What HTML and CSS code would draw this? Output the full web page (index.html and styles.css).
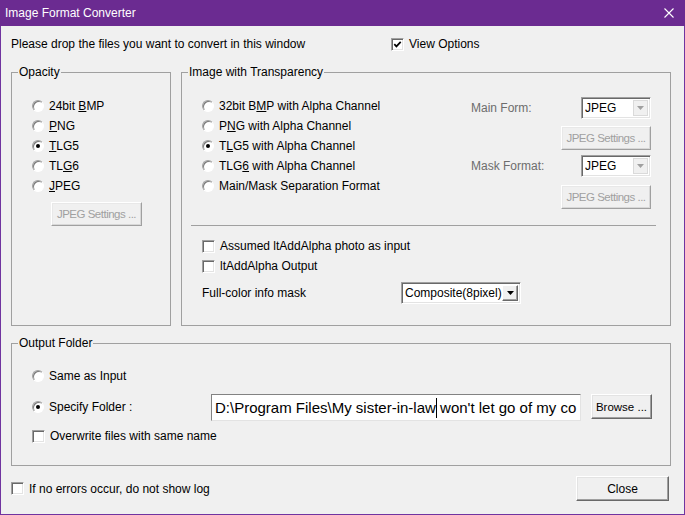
FILE: index.html
```html
<!DOCTYPE html>
<html>
<head>
<meta charset="utf-8">
<link rel="stylesheet" href="styles.css">
</head>
<body>
<div class="window">
  <div class="titlebar">
    <span class="title">Image Format Converter</span>
    <svg class="close-x" width="10" height="10" viewBox="0 0 10 10"><path d="M0.5 0.5 L9.5 9.5 M9.5 0.5 L0.5 9.5" stroke="#fff" stroke-width="1.1" fill="none"/></svg>
  </div>
  <div class="client">
    <div class="top-row">
      <span>Please drop the files you want to convert in this window</span>
      <label class="opt"><span class="box"><svg width="9" height="9" viewBox="0 0 9 9"><path d="M1.3 4.2 L3.4 6.4 L7.7 1.8" stroke="#000" stroke-width="1.7" fill="none"/></svg></span><span>View Options</span></label>
    </div>

    <div class="groups">
      <fieldset class="group opacity">
        <legend>Opacity</legend>
        <div class="opacity-body">
          <label class="opt"><span class="radio"></span><span>24bit <u>B</u>MP</span></label>
          <label class="opt"><span class="radio"></span><span><u>P</u>NG</span></label>
          <label class="opt"><span class="radio on"></span><span><u>T</u>LG5</span></label>
          <label class="opt"><span class="radio"></span><span>TL<u>G</u>6</span></label>
          <label class="opt"><span class="radio"></span><span><u>J</u>PEG</span></label>
          <button class="btn disabled jpeg-left">JPEG Settings ...</button>
        </div>
      </fieldset>

      <fieldset class="group transparency">
        <legend>Image with Transparency</legend>
        <div class="trans-body">
          <div class="trans-top">
            <div class="radios">
              <label class="opt"><span class="radio"></span><span>32bit B<u>M</u>P with Alpha Channel</span></label>
              <label class="opt"><span class="radio"></span><span>P<u>N</u>G with Alpha Channel</span></label>
              <label class="opt"><span class="radio on"></span><span>T<u>L</u>G5 with Alpha Channel</span></label>
              <label class="opt"><span class="radio"></span><span>TLG<u>6</u> with Alpha Channel</span></label>
              <label class="opt"><span class="radio"></span><span>Main/Mask Separation Format</span></label>
            </div>
            <div class="opts">
              <span class="lbl dim">Main Form:</span>
              <span class="combo dis"><span class="combo-text">JPEG</span><span class="drop"><svg width="7" height="4" viewBox="0 0 7 4"><path d="M0 0 H7 L3.5 4 Z" fill="#a0a0a0"/></svg></span></span>
              <button class="btn disabled jpeg-right first">JPEG Settings ...</button>
              <span class="lbl dim">Mask Format:</span>
              <span class="combo dis"><span class="combo-text">JPEG</span><span class="drop"><svg width="7" height="4" viewBox="0 0 7 4"><path d="M0 0 H7 L3.5 4 Z" fill="#a0a0a0"/></svg></span></span>
              <button class="btn disabled jpeg-right second">JPEG Settings ...</button>
            </div>
          </div>
          <div class="separator"></div>
          <div class="checks">
            <label class="opt"><span class="box"></span><span>Assumed ltAddAlpha photo as input</span></label>
            <label class="opt"><span class="box"></span><span>ltAddAlpha Output</span></label>
          </div>
          <div class="mask-row">
            <span class="mask-label">Full-color info mask</span>
            <span class="combo wide"><span class="combo-text">Composite(8pixel)</span><span class="drop raised"><svg width="7" height="4" viewBox="0 0 7 4"><path d="M0 0 H7 L3.5 4 Z" fill="#000"/></svg></span></span>
          </div>
        </div>
      </fieldset>
    </div>

    <fieldset class="group output">
      <legend>Output Folder</legend>
      <div class="output-body">
        <label class="opt"><span class="radio"></span><span>Same as Input</span></label>
        <div class="folder-row">
          <label class="opt folder-label"><span class="radio on"></span><span>Specify Folder :</span></label>
          <div class="textbox">D:\Program Files\My sister-in-law<span class="caret"></span> won't let go of my co</div>
          <button class="btn browse">Browse ...</button>
        </div>
        <label class="opt overwrite"><span class="box"></span><span>Overwrite files with same name</span></label>
      </div>
    </fieldset>

    <div class="bottom-row">
      <label class="opt"><span class="box"></span><span>If no errors occur, do not show log</span></label>
      <button class="btn close">Close</button>
    </div>
  </div>
</div>
</body>
</html>
```

FILE: styles.css
```css
* { box-sizing: border-box; }

body {
  margin: 0;
  font-family: "Liberation Sans", Arial, sans-serif;
  font-size: 12px;
  color: #000;
  background: #f0f0f0;
}

.window {
  width: 685px;
  height: 515px;
  display: flex;
  flex-direction: column;
}

.titlebar {
  flex: none;
  height: 26px;
  background: #6b2b91;
  color: #fff;
  display: flex;
  align-items: center;
  justify-content: space-between;
  padding: 0 11px 0 5px;
}

.title { line-height: 15px; }

.close-x { display: block; }

.client {
  flex: 1;
  background: #f0f0f0;
  border: 1px solid #7034a0;
  border-top: none;
  padding: 8px 13px 0 10px;
}

.top-row {
  display: grid;
  grid-template-columns: 380px auto;
  align-items: center;
  height: 20px;
}

.opt {
  display: flex;
  align-items: center;
  gap: 5px;
  height: 20px;
  white-space: nowrap;
}

u { text-decoration: underline; text-underline-offset: 1px; }

/* checkbox */
.box {
  flex: none;
  width: 13px;
  height: 13px;
  background: #fff;
  border: 1px solid;
  border-color: #a0a0a0 #fff #fff #a0a0a0;
  box-shadow: inset 1px 1px 0 #696969, inset -1px -1px 0 #e3e3e3;
  display: flex;
  align-items: center;
  justify-content: center;
}
.box svg { display: block; }

/* radio */
.radio {
  flex: none;
  position: relative;
  width: 12px;
  height: 12px;
  border-radius: 50%;
  background: #fff;
  border: 1px solid;
  border-color: #a0a0a0 #fff #fff #a0a0a0;
  box-shadow: inset 1px 1px 0 #7a7a7a;
}
.radio.on::after {
  content: "";
  position: absolute;
  left: 3px;
  top: 3px;
  width: 4px;
  height: 4px;
  border-radius: 50%;
  background: #000;
}

/* group boxes */
.groups {
  display: flex;
  gap: 10px;
  margin-top: 11px;
}

fieldset.group {
  margin: 0;
  padding: 0;
  border: 1px solid #a0a0a0;
  min-width: 0;
}

legend {
  padding: 0 1px;
  margin-left: 6px;
  line-height: 15px;
  font-size: 12px;
}

fieldset.opacity { width: 160px; height: 261px; }
fieldset.transparency { width: 490px; height: 261px; }
fieldset.output { height: 130px; margin-top: 10px; }

.opacity-body { padding: 16px 0 0 20px; }

/* buttons */
.btn {
  font-family: "Liberation Sans", Arial, sans-serif;
  font-size: 12px;
  color: #000;
  background: #f0f0f0;
  border: 1px solid;
  border-color: #fff #696969 #696969 #fff;
  box-shadow: inset -1px -1px 0 #a0a0a0, inset 1px 1px 0 #e3e3e3;
  padding: 0;
  margin: 0;
  display: block;
  white-space: nowrap;
}
.btn.disabled {
  color: #a0a0a0;
  border-color: #fff #a0a0a0 #a0a0a0 #fff;
  box-shadow: inset -1px -1px 0 #d8d8d8, inset 1px 1px 0 #e8e8e8;
  font-size: 11.5px;
  letter-spacing: -0.5px;
}

.jpeg-left {
  width: 91px;
  height: 24px;
  margin: 6px 0 0 19px;
}

/* transparency group */
.trans-body { padding: 16px 19px 0 20px; }

.trans-top {
  display: flex;
  justify-content: space-between;
}

.opts {
  display: grid;
  grid-template-columns: 110px 70px;
  width: 180px;
  margin-top: 1px;
}

.lbl { align-self: center; }
.dim { color: #6d6d6d; }

.jpeg-right {
  grid-column: 1 / -1;
  justify-self: end;
  width: 90px;
  height: 24px;
}
.jpeg-right.first { margin: 7px 0 5px; }
.jpeg-right.second { margin-top: 8px; }

.combo {
  display: flex;
  align-items: stretch;
  height: 22px;
  background: #fff;
  border: 1px solid;
  border-color: #a0a0a0 #fff #fff #a0a0a0;
  box-shadow: inset 1px 1px 0 #696969, inset -1px -1px 0 #e3e3e3;
  padding: 2px 2px 2px 3px;
}
.combo.dis { width: 70px; }
.combo.wide { width: 120px; }

.combo-text {
  flex: 1;
  line-height: 16px;
  white-space: nowrap;
  overflow: hidden;
}

.drop {
  flex: none;
  width: 15px;
  display: flex;
  align-items: center;
  justify-content: center;
  background: #f0f0f0;
  border: 1px solid #dadada;
}
.drop svg { display: block; }
.drop.raised {
  width: 16px;
  border-color: #fff #696969 #696969 #fff;
  box-shadow: inset -1px -1px 0 #a0a0a0;
}

.separator {
  height: 1px;
  background: #a0a0a0;
  margin: 16px -5px 0 -11px;
}

.checks { margin-top: 10px; }

.mask-row {
  display: flex;
  align-items: center;
  margin-top: 6px;
  height: 22px;
}
.mask-label { width: 199px; }

/* output group */
.output-body { padding: 15px 0 0 20px; }

.folder-row {
  display: flex;
  align-items: flex-start;
  height: 28px;
  margin-top: 7px;
}
.folder-label {
  width: 179px;
  height: 28px;
}

.textbox {
  width: 370px;
  height: 27px;
  margin-top: 1px;
  background: #fff;
  border: 1px solid;
  border-color: #828282 #e3e3e3 #e3e3e3 #828282;
  font-size: 15px;
  line-height: 25px;
  padding-left: 3px;
  white-space: nowrap;
  overflow: hidden;
}

.caret {
  display: inline-block;
  width: 1px;
  height: 20px;
  margin-right: -1px;
  background: #000;
  vertical-align: -5px;
}

.browse {
  width: 61px;
  height: 25px;
  margin: 1px 0 0 10px;
  font-size: 11.5px;
}

.overwrite { margin-top: 5px; }

/* bottom */
.bottom-row {
  display: flex;
  align-items: center;
  justify-content: space-between;
  margin-top: 10px;
  height: 25px;
}

.close {
  width: 93px;
  height: 25px;
  margin-right: 2px;
}
```
